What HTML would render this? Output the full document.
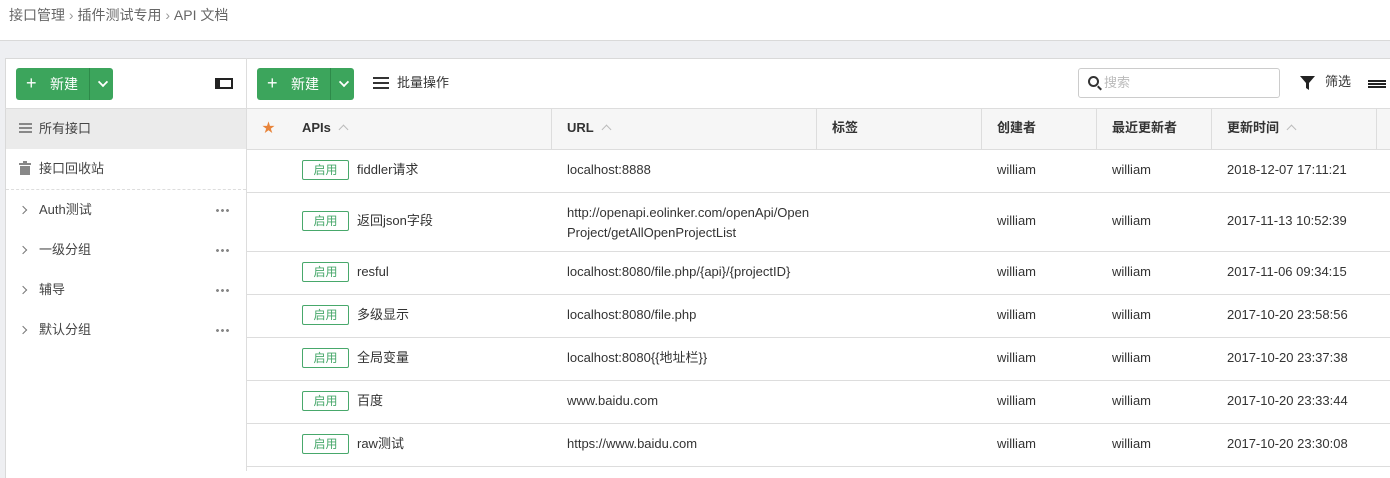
<!DOCTYPE html><html><head><meta charset="utf-8"><style>
*{margin:0;padding:0;box-sizing:border-box}
body{width:1390px;height:471px;overflow:hidden;background:#eeeff2;font-family:"Liberation Sans","Noto Sans CJK SC",sans-serif;font-size:13px;color:#333;position:relative;line-height:16px}
.top{position:absolute;left:0;top:0;width:1390px;height:41px;background:#fff;border-bottom:1px solid #d9d9d9;color:#666;font-size:14px;padding:7px 0 0 9px}
.abs{position:absolute;line-height:16px}
.panel{position:absolute;left:5px;top:58px;width:1390px;height:420px;background:#fff;border-left:1px solid #d9d9d9;border-top:1px solid #d9d9d9}
.btn{position:absolute;height:32px;background:#3ca55c;border-radius:3px;color:#fff;font-size:14px}
.btn .p{position:absolute;left:10px;top:6px;font-size:18px;line-height:18px}
.btn .t{position:absolute;left:34px;top:8px;line-height:16px}
.btn .d{position:absolute;left:73px;top:0;width:1px;height:32px;background:#2e8a4a}
.btn .c{position:absolute;left:83px;top:10px;width:8px;height:8px;border-right:2px solid #fff;border-bottom:2px solid #fff;transform:rotate(45deg) scale(.9)}
.hl{position:absolute;height:1px;background:#ddd}
.vl{position:absolute;width:1px;background:#ddd}
.tag{position:absolute;width:47px;height:20px;border:1px solid #48a86b;border-radius:2px;color:#48a86b;font-size:12px;text-align:center;line-height:18px}
.side{position:absolute;left:39px;font-size:13px;color:#444;line-height:16px}
.dots{position:absolute;left:215px;width:15px;height:3px;background:radial-gradient(circle,#888 1.3px,transparent 1.6px) 0 0/5px 3px repeat-x}
.arr{position:absolute;left:20px;width:6px;height:6px;border-right:1.5px solid #777;border-top:1.5px solid #777;transform:rotate(45deg)}
.th{position:absolute;top:120px;font-size:13px;font-weight:bold;color:#333;line-height:16px}
.up{display:inline-block;width:7px;height:7px;border-left:1px solid #bbb;border-top:1px solid #bbb;transform:rotate(45deg);margin-left:9px;vertical-align:-1px}
.g{color:#999}
</style></head><body>
<div class="top">接口管理 <span class="g">›</span> 插件测试专用 <span class="g">›</span> API 文档</div>
<div class="panel"></div>
<div class="btn" style="left:16px;top:68px;width:97px"><span class="p">+</span><span class="t">新建</span><span class="d"></span><span class="c"></span></div>
<div class="abs" style="left:215px;top:78px;width:18px;height:11px;border:2px solid #222;border-left-width:5px"></div>
<div class="vl" style="left:246px;top:58px;height:413px"></div>
<div class="hl" style="left:5px;top:108px;width:1385px"></div>
<div class="abs" style="left:6px;top:109px;width:240px;height:40px;background:#ebebeb"></div>
<div class="abs" style="left:19px;top:123px;width:13px;height:10px;border-top:2px solid #888;border-bottom:2px solid #888"></div>
<div class="abs" style="left:19px;top:127px;width:13px;height:2px;background:#888"></div>
<div class="side" style="top:121px">所有接口</div>
<div class="abs" style="left:19px;top:163px;width:12px;height:2px;background:#888"></div>
<div class="abs" style="left:23px;top:161px;width:4px;height:2px;background:#888"></div>
<div class="abs" style="left:20px;top:166px;width:10px;height:9px;background:#888"></div>
<div class="side" style="top:161px">接口回收站</div>
<div class="abs" style="left:6px;top:189px;width:240px;border-top:1px dashed #ddd"></div>
<div class="arr" style="top:207px"></div><div class="side" style="top:202px">Auth测试</div><div class="dots" style="top:209px"></div>
<div class="arr" style="top:247px"></div><div class="side" style="top:242px">一级分组</div><div class="dots" style="top:249px"></div>
<div class="arr" style="top:287px"></div><div class="side" style="top:282px">辅导</div><div class="dots" style="top:289px"></div>
<div class="arr" style="top:327px"></div><div class="side" style="top:322px">默认分组</div><div class="dots" style="top:329px"></div>
<div class="btn" style="left:257px;top:68px;width:97px"><span class="p">+</span><span class="t">新建</span><span class="d"></span><span class="c"></span></div>
<div class="abs" style="left:373px;top:77px;width:16px;height:2px;background:#333;box-shadow:0 5px 0 #333,0 10px 0 #333"></div>
<div class="abs" style="left:397px;top:75px;font-size:13px">批量操作</div>
<div class="abs" style="left:1078px;top:68px;width:202px;height:30px;border:1px solid #ccc;border-radius:3px"></div>
<div class="abs" style="left:1088px;top:76px;width:11px;height:11px;border:2px solid #333;border-radius:50%"></div>
<div class="abs" style="left:1097px;top:87px;width:5px;height:2px;background:#333;transform:rotate(45deg)"></div>
<div class="abs" style="left:1104px;top:75px;color:#bbb">搜索</div>
<svg class="abs" style="left:1299px;top:75px" width="17" height="16"><path d="M1 1H16L10 8V15L7 13V8Z" fill="#222"/></svg>
<div class="abs" style="left:1325px;top:74px">筛选</div>
<div class="abs" style="left:1368px;top:80px;width:18px;height:9px;background:repeating-linear-gradient(#222 0 2px,#fff 2px 3px)"></div>
<div class="abs" style="left:247px;top:109px;width:1143px;height:40px;background:#f6f6f6"></div>
<div class="abs" style="left:262px;top:120px;color:#e8843a;font-size:13px">★</div>
<div class="th" style="left:302px">APIs<span class="up"></span></div>
<div class="th" style="left:567px">URL<span class="up"></span></div>
<div class="th" style="left:832px">标签</div>
<div class="th" style="left:997px">创建者</div>
<div class="th" style="left:1112px">最近更新者</div>
<div class="th" style="left:1227px">更新时间<span class="up"></span></div>
<div class="vl" style="left:551px;top:109px;height:40px"></div>
<div class="vl" style="left:816px;top:109px;height:40px"></div>
<div class="vl" style="left:981px;top:109px;height:40px"></div>
<div class="vl" style="left:1096px;top:109px;height:40px"></div>
<div class="vl" style="left:1211px;top:109px;height:40px"></div>
<div class="vl" style="left:1376px;top:109px;height:40px"></div>
<div class="hl" style="left:247px;top:149px;width:1143px"></div>
<div class="hl" style="left:247px;top:192px;width:1143px"></div>
<div class="hl" style="left:247px;top:251px;width:1143px"></div>
<div class="hl" style="left:247px;top:294px;width:1143px"></div>
<div class="hl" style="left:247px;top:337px;width:1143px"></div>
<div class="hl" style="left:247px;top:380px;width:1143px"></div>
<div class="hl" style="left:247px;top:423px;width:1143px"></div>
<div class="hl" style="left:247px;top:466px;width:1143px"></div>
<div class="tag" style="left:302px;top:160px">启用</div><div class="abs" style="left:357px;top:162px">fiddler请求</div><div class="abs" style="left:567px;top:162px">localhost:8888</div><div class="abs" style="left:997px;top:162px">william</div><div class="abs" style="left:1112px;top:162px">william</div><div class="abs" style="left:1227px;top:162px">2018-12-07 17:11:21</div>
<div class="tag" style="left:302px;top:211px">启用</div><div class="abs" style="left:357px;top:213px">返回json字段</div><div class="abs" style="left:567px;top:203px;line-height:20px;width:250px">http://openapi.eolinker.com/openApi/Open<br>Project/getAllOpenProjectList</div><div class="abs" style="left:997px;top:213px">william</div><div class="abs" style="left:1112px;top:213px">william</div><div class="abs" style="left:1227px;top:213px">2017-11-13 10:52:39</div>
<div class="tag" style="left:302px;top:262px">启用</div><div class="abs" style="left:357px;top:264px">resful</div><div class="abs" style="left:567px;top:264px">localhost:8080/file.php/{api}/{projectID}</div><div class="abs" style="left:997px;top:264px">william</div><div class="abs" style="left:1112px;top:264px">william</div><div class="abs" style="left:1227px;top:264px">2017-11-06 09:34:15</div>
<div class="tag" style="left:302px;top:305px">启用</div><div class="abs" style="left:357px;top:307px">多级显示</div><div class="abs" style="left:567px;top:307px">localhost:8080/file.php</div><div class="abs" style="left:997px;top:307px">william</div><div class="abs" style="left:1112px;top:307px">william</div><div class="abs" style="left:1227px;top:307px">2017-10-20 23:58:56</div>
<div class="tag" style="left:302px;top:348px">启用</div><div class="abs" style="left:357px;top:350px">全局变量</div><div class="abs" style="left:567px;top:350px">localhost:8080{{地址栏}}</div><div class="abs" style="left:997px;top:350px">william</div><div class="abs" style="left:1112px;top:350px">william</div><div class="abs" style="left:1227px;top:350px">2017-10-20 23:37:38</div>
<div class="tag" style="left:302px;top:391px">启用</div><div class="abs" style="left:357px;top:393px">百度</div><div class="abs" style="left:567px;top:393px">www.baidu.com</div><div class="abs" style="left:997px;top:393px">william</div><div class="abs" style="left:1112px;top:393px">william</div><div class="abs" style="left:1227px;top:393px">2017-10-20 23:33:44</div>
<div class="tag" style="left:302px;top:434px">启用</div><div class="abs" style="left:357px;top:436px">raw测试</div><div class="abs" style="left:567px;top:436px">https://www.baidu.com</div><div class="abs" style="left:997px;top:436px">william</div><div class="abs" style="left:1112px;top:436px">william</div><div class="abs" style="left:1227px;top:436px">2017-10-20 23:30:08</div>
</body></html>
